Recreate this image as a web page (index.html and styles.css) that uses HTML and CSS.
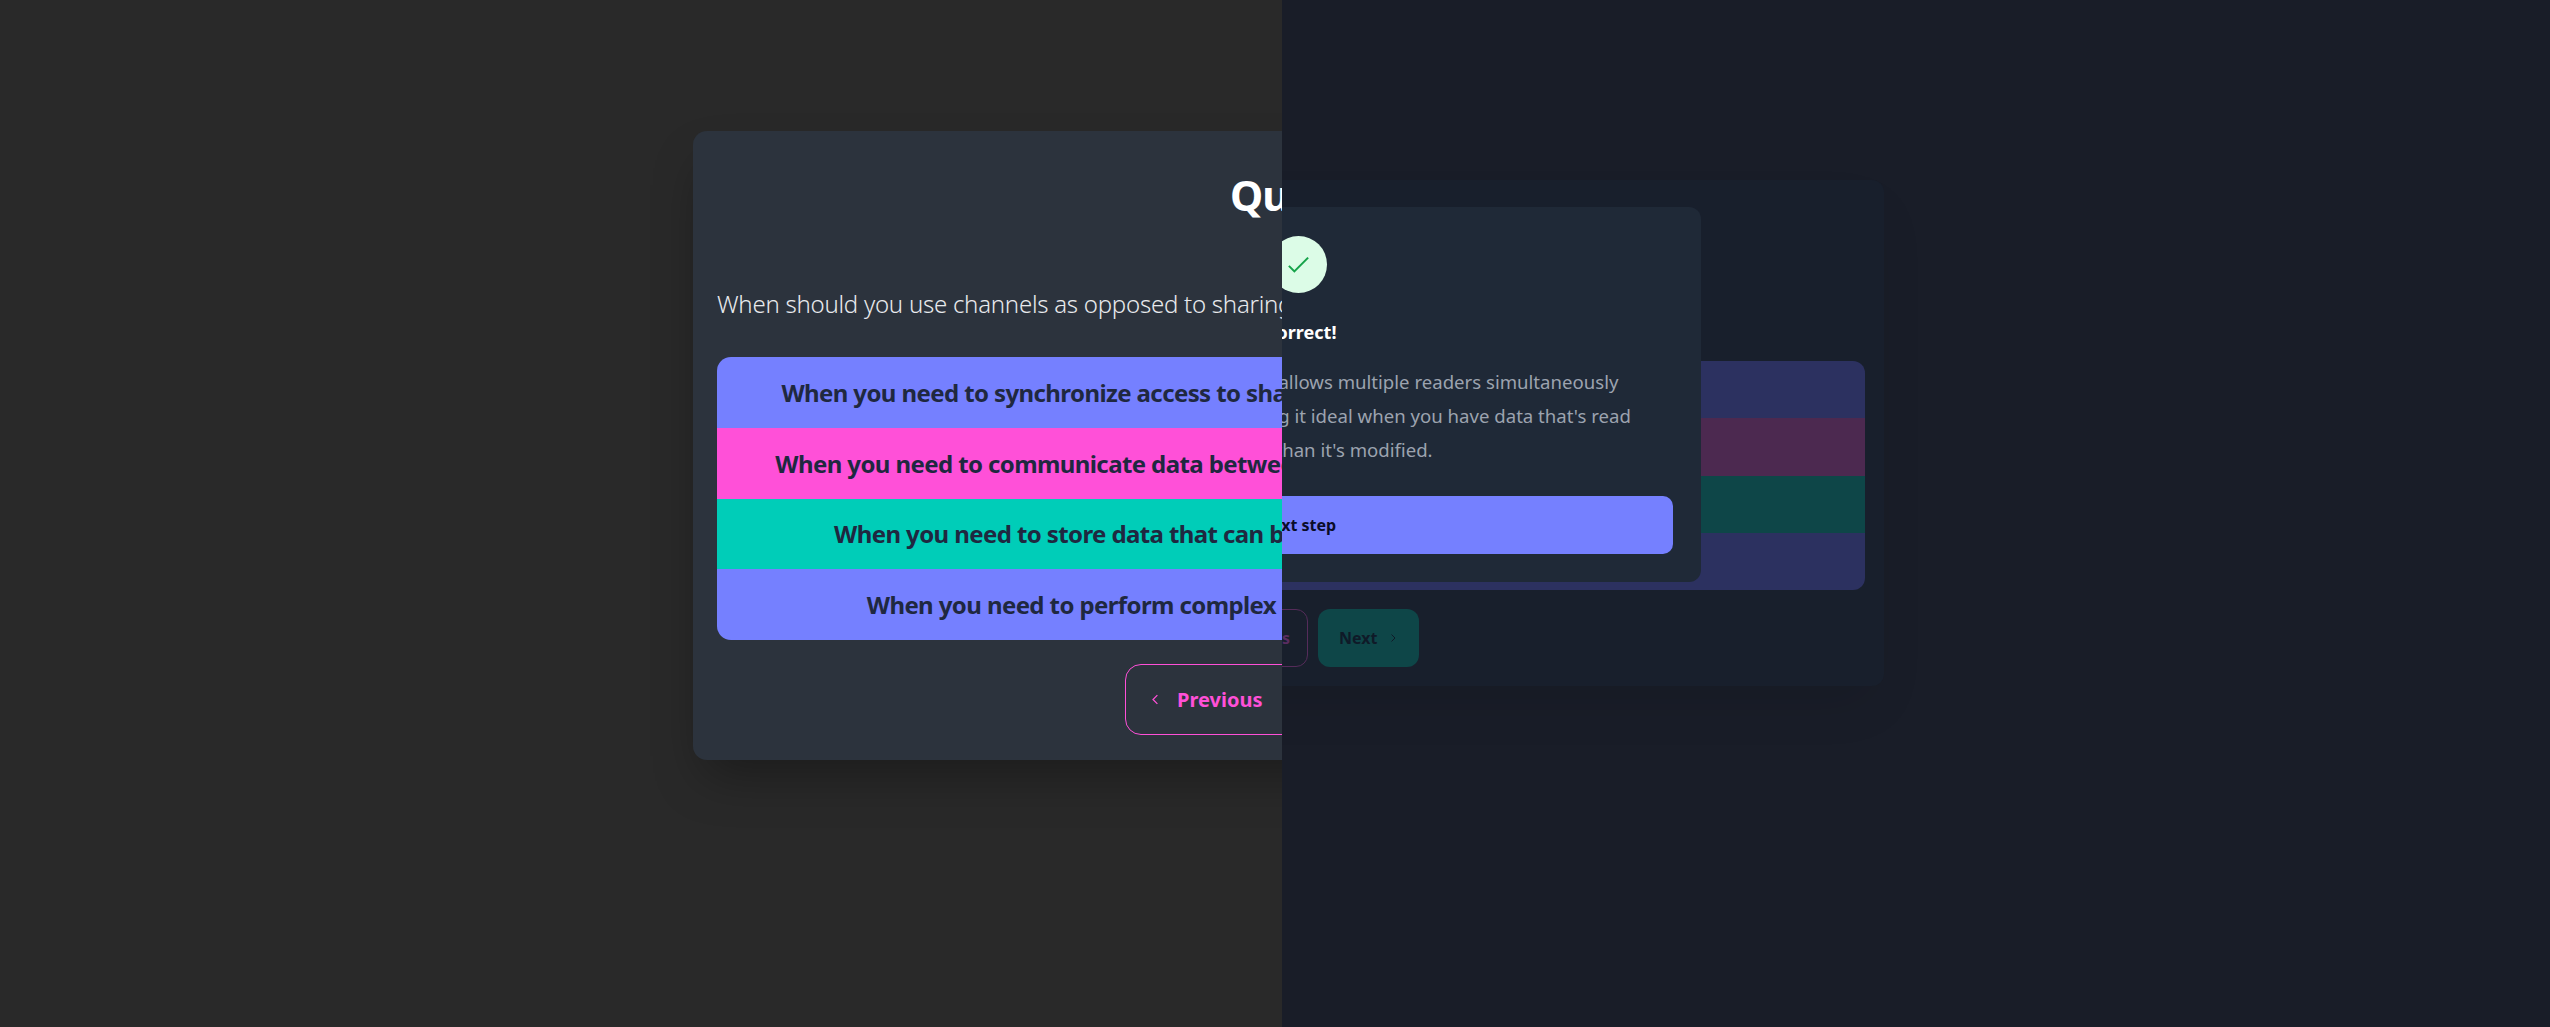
FILE: index.html
```html
<!DOCTYPE html>
<html lang="en">
<head>
    <meta charset="UTF-8">
    <meta name="viewport" content="width=device-width, initial-scale=1.0">
    <title>Quiz</title>
    <link rel="stylesheet" href="styles.css">
</head>
<body>
    <div class="split">
        <div class="pane-left">
            <div class="card">
                <h1 class="card-title">Quiz</h1>
                <p class="question">When should you use channels as opposed to sharing memory between goroutines?</p>
                <div class="options">
                    <div class="option option-primary">When you need to synchronize access to shared memory between all of the goroutines</div>
                    <div class="option option-secondary">When you need to communicate data between goroutines and pass along its ownership</div>
                    <div class="option option-accent">When you need to store data that can be read and edited by many goroutines</div>
                    <div class="option option-primary">When you need to perform complex calculations across several workers</div>
                </div>
                <div class="nav">
                    <button class="btn-prev">
                        <svg class="chevron" viewBox="0 0 24 24"><path d="M15 19l-7-7 7-7"/></svg>
                        Previous
                    </button>
                    <button class="btn-next">Next</button>
                </div>
            </div>
        </div>

        <div class="pane-right">
            <div class="dim-card">
                <div class="dim-options">
                    <div class="dim-option dim-primary"></div>
                    <div class="dim-option dim-secondary"></div>
                    <div class="dim-option dim-accent"></div>
                    <div class="dim-option dim-primary"></div>
                </div>
                <div class="dim-nav">
                    <button class="dim-prev">Previous</button>
                    <button class="dim-next">
                        Next
                        <svg class="chevron" viewBox="0 0 24 24"><path d="M9 5l7 7-7 7"/></svg>
                    </button>
                </div>
            </div>

            <div class="modal">
                <div class="check-circle">
                    <svg class="check" viewBox="0 0 24 24"><path d="M5 13l4 4L19 7"/></svg>
                </div>
                <h3 class="modal-title">Correct!</h3>
                <p class="modal-text">
                    A RWMutex allows multiple readers simultaneously<br>
                    often making it ideal when you have data that's read<br>
                    more often than it's modified.
                </p>
                <button class="modal-btn">Next step</button>
            </div>
        </div>
    </div>
</body>
</html>
```

FILE: styles.css
```css
* {
    box-sizing: border-box;
}
body {
    margin: 0;
    font-family: "Noto Sans", sans-serif;
    background-color: #191d28;
    overflow: hidden;
}
button {
    font-family: inherit;
    cursor: pointer;
}
.split {
    display: flex;
    height: 100vh;
}
.chevron {
    width: 15px;
    height: 15px;
    fill: none;
    stroke: currentColor;
    stroke-width: 2;
    flex-shrink: 0;
}

/* left pane */
.pane-left {
    flex: 0 0 1282px;
    overflow: hidden;
    padding: 131px 0 0 693px;
    background-color: #292929;
}
.card {
    width: 1164px;
    padding: 40px 24px 25px;
    background-color: #2c333d;
    border-radius: 14px;
    box-shadow: 0 25px 50px -12px rgba(0,0,0,0.35);
}
.card-title {
    margin: 0 0 67px;
    font-size: 42px;
    line-height: 48px;
    font-weight: 700;
    letter-spacing: -1px;
    text-align: center;
    color: #fff;
}
.question {
    margin: 0 0 35px;
    font-size: 24px;
    line-height: 36px;
    font-weight: 300;
    letter-spacing: -0.25px;
    color: #e8eaed;
    white-space: nowrap;
}
.options {
    border-radius: 14px;
    overflow: hidden;
}
.option {
    height: 70.75px;
    display: flex;
    align-items: center;
    justify-content: center;
    font-size: 24px;
    font-weight: 700;
    letter-spacing: -0.6px;
    color: #1f2840;
    white-space: nowrap;
}
.option-primary { background-color: #7580ff; }
.option-secondary { background-color: #ff50d8; }
.option-accent { background-color: #00cdb8; }
.nav {
    display: flex;
    justify-content: center;
    gap: 20px;
    margin-top: 24px;
}
.btn-prev {
    display: flex;
    align-items: center;
    gap: 14px;
    width: 180px;
    height: 71px;
    padding: 0 0 0 22px;
    background: none;
    border: 1px solid #ff50d8;
    border-radius: 16px;
    color: #ff50d8;
    font-size: 20px;
    font-weight: 700;
}
.btn-next {
    width: 100px;
    height: 71px;
    background-color: #00cdb8;
    border: 0;
    border-radius: 16px;
}

/* right pane */
.pane-right {
    flex: 1;
    position: relative;
    overflow: hidden;
    padding-top: 180px;
}
.dim-card {
    width: 702px;
    height: 506px;
    margin-left: -100px;
    padding: 181px 19px 0 0;
    background-color: #181f2c;
    border-radius: 12px;
    box-shadow: 0 25px 50px -12px rgba(0,0,0,0.1);
}
.dim-options {
    border-radius: 12px;
    overflow: hidden;
}
.dim-option {
    height: 57.25px;
}
.dim-primary { background-color: #2c3160; }
.dim-secondary { background-color: #4c2950; }
.dim-accent { background-color: #0e4648; }
.dim-nav {
    display: flex;
    gap: 10px;
    margin-top: 19px;
}
.dim-prev {
    width: 126px;
    height: 58px;
    padding: 0 17px 0 0;
    text-align: right;
    background: none;
    border: 1px solid #552c5a;
    border-radius: 12px;
    color: #5a2c60;
    font-size: 16px;
    font-weight: 700;
}
.dim-next {
    display: flex;
    align-items: center;
    gap: 10px;
    width: 101px;
    height: 58px;
    padding: 0 0 0 21px;
    background-color: #0e4648;
    border: 0;
    border-radius: 12px;
    color: #0f1a28;
    font-size: 16px;
    font-weight: 700;
}
.dim-next .chevron {
    width: 12px;
    height: 12px;
}
.modal {
    position: absolute;
    top: 207px;
    right: 849px;
    width: 560px;
    height: 375px;
    padding: 29px 28px 0 0;
    background-color: #1f2937;
    border-radius: 12px;
}
.check-circle {
    display: flex;
    align-items: center;
    justify-content: center;
    width: 57px;
    height: 57px;
    margin-left: 129px;
    background-color: #dcfce7;
    border-radius: 50%;
}
.check {
    width: 33px;
    height: 33px;
    fill: none;
    stroke: #16a34a;
    stroke-width: 1.5;
}
.modal-title {
    margin: 26px 0 0 124px;
    font-size: 18px;
    line-height: 26px;
    font-weight: 700;
    color: #fff;
}
.modal-text {
    margin: 20px 0 0 32px;
    font-size: 18.6px;
    line-height: 34px;
    color: #9ca3af;
    white-space: nowrap;
}
.modal-btn {
    display: block;
    width: 532px;
    height: 58px;
    margin-top: 29px;
    padding: 0 0 0 118px;
    text-align: left;
    background-color: #7580ff;
    border: 0;
    border-radius: 10px;
    color: #0a0c28;
    font-size: 16px;
    font-weight: 700;
}
```
